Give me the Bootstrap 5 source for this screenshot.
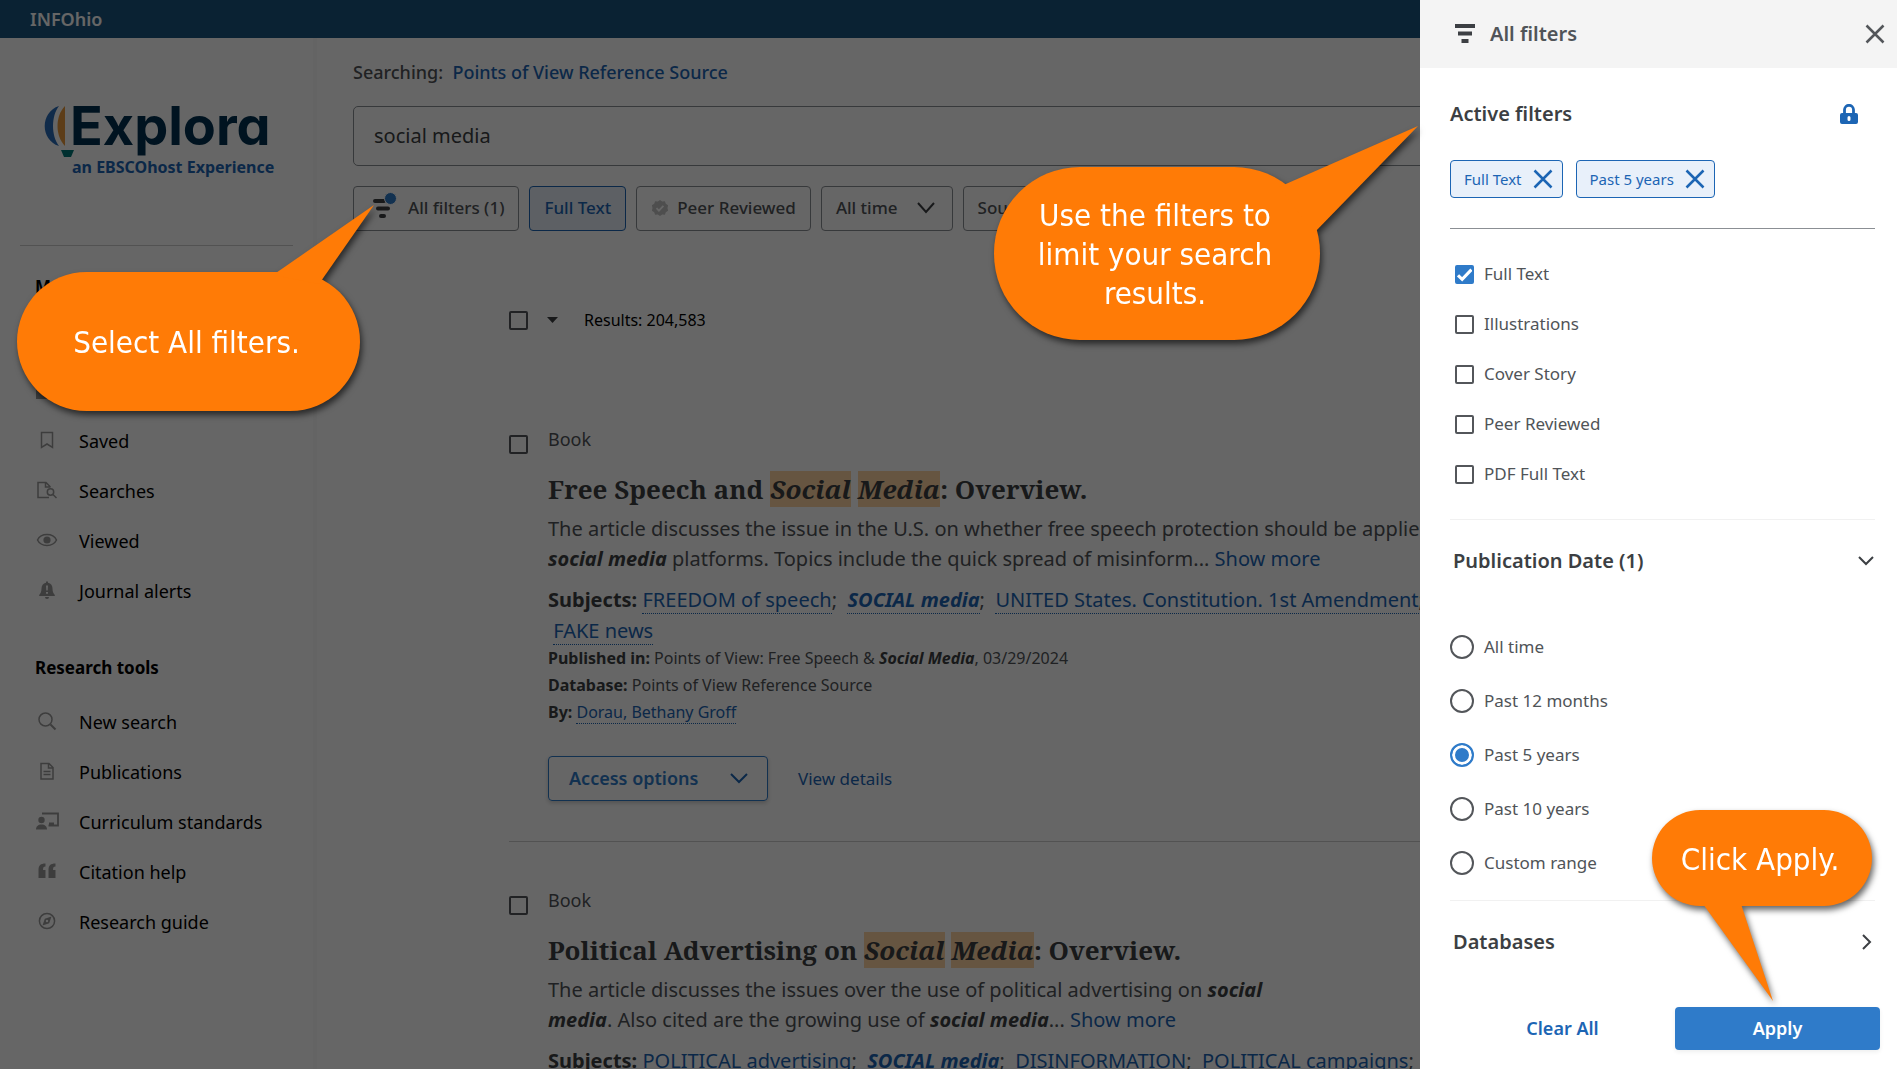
<!DOCTYPE html>
<html lang="en">
<head>
<meta charset="utf-8">
<meta name="viewport" content="width=device-width, initial-scale=1">
<title>Explora – social media</title>
<link href="https://cdn.jsdelivr.net/npm/bootstrap@5.3.0/dist/css/bootstrap.min.css" rel="stylesheet">
<style>
:root{--link:#1c65b4;--ink:#505458;--dark:#3c3f43;--blue:#2f7bc9;--orange:#ff7b06}
body{font-family:"Noto Sans",sans-serif;font-size:17px;line-height:24px;color:var(--ink);background:#fff}
a{color:var(--link);text-decoration:none}
svg{display:block;flex:none}
.topbar{background:#1a5580;height:38px;padding:0 30px;color:#fff;font-size:18px;font-weight:600}
/* sidebar */
.side{width:313px;flex:none;padding:0 20px;font-size:18px}
.edge{width:4px;flex:none;background:#f9f9f9}
.brand{height:207px;padding:58px 0 0 24px}
.brand-name{font-family:Inter,Lato,sans-serif;font-feature-settings:"cv11";font-weight:700;font-size:54px;line-height:60px;color:#003050}
.brand-sub{font-size:16px;line-height:22px;font-weight:700;color:var(--link);white-space:nowrap;padding-left:28px}
.side-rule{height:1px;background:#ccc}
.side h2{font-size:17px;line-height:24px;font-weight:700;color:#000;margin:29px 0 18px 15px}
.side ul+h2{margin-top:39px}
.side li{height:50px}
.side li a{color:#000;display:flex;align-items:center;height:50px;gap:20px;padding:0 0 2px 15px}
.side li svg{width:24px;height:24px;color:#999;margin:-2px 0 0}
/* search area */
.pane{padding:22px 36px 0}
.searching{font-size:18px;font-weight:500;margin-bottom:22px}
.search-box{height:60px;border:1px solid #8b8f94;border-radius:5px;padding:0 20px 2px;font-size:20px;color:var(--dark);width:100%;background:#fff}
.filters{margin-top:20px;gap:10px;white-space:nowrap}
.filters .btn{height:45px;border:1px solid #8b8f94;border-radius:4px;padding:0 14px 2px;font-size:17px;font-weight:500;color:var(--ink);display:flex;align-items:center}
.filters .btn.on{border-color:var(--link);background:#e8f0fa;color:var(--link)}
.filters .funnel{margin-right:12px;overflow:visible}
.results{padding-left:156px}
.bar{margin:77px 0 49px;font-size:16px;color:#000}
.tick{width:19px;height:19px;border:2px solid #53565a!important;border-radius:2px!important;margin:0!important;flex:none;float:none!important}
.tick:checked{background-color:var(--blue);border-color:var(--blue)!important}
.hit-item{padding-top:46px;gap:20px;font-size:16px}
.hit-item>.tick{margin-top:8px!important}
.kind{font-size:18px}
.hit-item h3{font-family:"Noto Serif","Liberation Serif",serif;font-weight:700;font-size:26px;line-height:36px;color:var(--dark);margin:20px 0 7px}
.hit-item h3 em{background:#ffd5a3;display:inline-block}
.abstract{font-size:20px;line-height:30px;margin:0 0 10px}
.subjects{font-size:20px;line-height:31px;margin-bottom:-1px}
.meta{line-height:27px}
.dot{border-bottom:1px dotted var(--link)}
b,strong{font-weight:700;color:var(--dark)}
a b{color:var(--link)}
.actions{margin:30px 0 40px;gap:30px;font-size:17px}
.actions .btn{width:220px;height:45px;border:1px solid var(--blue);border-radius:4px;color:var(--blue);font-size:18px;font-weight:600;padding:0 18px 0 20px;box-shadow:0 2px 4px #0003}
.item-rule{height:1px;background:#ccc}
/* filter panel */
.offcanvas-backdrop.dim{opacity:.6}
.offcanvas.panel{width:477px;border:0;background:#fff;color:var(--ink)}
.panel-head{height:68px;background:#f4f4f4;padding:0 12px 0 35px;font-size:20px;font-weight:600}
.panel-head .me-3{margin-right:15px!important}
.panel-body{padding:32px 22px 0 30px;flex:1 1 auto;overflow:hidden}
.panel h2{font-size:20px;line-height:28px;font-weight:600;color:var(--dark);margin:0}
.chips{margin:32px 0 30px;gap:13px}
.chips .btn{height:38px;border:1px solid var(--link);border-radius:4px;background:#e8f0fa;color:var(--link);font-size:15px;padding:0 9px 0 13px;display:flex;align-items:center;gap:11px}
.rule{height:1px;background:#8b8f94}
.rule.soft{background:#f1f1f1}
.checks{padding:20px 0 20px 5px}
.checks .form-check{height:50px;gap:10px;padding:0;margin:0}
.checks .tick:checked{background-image:url("data:image/svg+xml,%3csvg xmlns='http://www.w3.org/2000/svg' viewBox='0 0 16 16'%3e%3cpath fill='none' stroke='%23fff' stroke-width='3' d='M1.5 8.5l4 4 9-9.500'/%3e%3c/svg%3e");background-size:16px}
.fold{height:82px;padding:0 1px 0 3px;background:none;border:0;width:100%;text-align:left}
.radios{padding:18px 0 10px}
.radios .form-check{height:54px;gap:10px;padding:0;margin:0}
.dial{width:24px!important;height:24px!important;border:2px solid #53565a!important;margin:0!important;float:none!important;flex:none}
.dial:checked{border-color:var(--blue)!important;background:var(--blue)!important;box-shadow:inset 0 0 0 3px #fff!important}
.panel-foot{padding:0 17px 19px 40px;gap:10px}
.panel-foot .btn{flex:1 1 0;height:43px;border:0;border-radius:4px;font-size:18px;font-weight:600;padding:0}
.btn.clear{color:var(--link)}
.btn.apply{background:var(--blue)}
/* tutorial balloons, over everything else */
.tip{position:absolute;z-index:2000;color:#fff;font-family:"DejaVu Sans Condensed","DejaVu Sans",sans-serif;font-size:31px;line-height:39px;text-align:center;border-radius:86px;background:var(--orange);display:flex;align-items:center;justify-content:center;padding:2px 4px 0 0;filter:drop-shadow(2px 4px 3px #0009)}
.tip svg{position:absolute;fill:var(--orange);overflow:visible;left:0;top:0;width:1px;height:1px}
.tip span{position:relative}
.tip-a{left:17px;top:272px;width:343px;height:139px}
.tip-b{right:577px;top:167px;width:326px;height:173px}
.tip-c{right:25px;bottom:163px;width:220px;height:96px}
</style>
<script src="https://cdn.jsdelivr.net/npm/bootstrap@5.3.0/dist/js/bootstrap.bundle.min.js"></script>
</head>
<body>
<div class="vh-100 overflow-hidden d-flex flex-column">
  <header class="topbar d-flex align-items-center flex-shrink-0">INFOhio</header>
  <div class="d-flex flex-grow-1 overflow-hidden">
    <nav class="side" aria-label="Main">
      <div class="brand">
        <div class="d-flex">
          <svg width="26" height="60" viewBox="0 0 26 60" overflow="visible"><path d="M15 10C-4 16-4 44 15 50 7 40 7 20 15 10z" fill="#2a6cb8"/><path d="M21 10v40C11 40 11 20 21 10z" fill="#e99a3c"/><path d="M17 54h13l-3 7h-7z" fill="#007878"/></svg>
          <div class="brand-name">Explora</div>
        </div>
        <div class="brand-sub">an EBSCOhost Experience</div>
      </div>
      <div class="side-rule"></div>
      <h2>My dashboard</h2>
      <ul class="list-unstyled m-0">
        <li><a href="#"><svg viewBox="0 0 24 24" fill="currentColor"><path d="M4 4h7v7H4zM13 4h7v7h-7zM4 13h7v7H4zM13 13h7v7h-7z"/></svg>Overview</a></li>
        <li><a href="#"><svg viewBox="0 0 24 24" fill="currentColor"><path d="M1 5h8l2 3h12v13H1z"/></svg>Projects</a></li>
        <li><a href="#"><svg viewBox="0 0 24 24" fill="none" stroke="currentColor" stroke-width="1.500"><path d="M6.500 4.500h11v15L12 16l-5.500 3.500z"/></svg>Saved</a></li>
        <li><a href="#"><svg viewBox="0 0 24 24" fill="none" stroke="currentColor" stroke-width="1.500"><path d="M14 19.500H3v-15h8l4 4v1M10.500 4.500V9H15"/><circle cx="15.500" cy="14" r="3.200"/><path d="M18 16.500l3.500 3.500"/></svg>Searches</a></li>
        <li><a href="#"><svg viewBox="0 0 24 24" fill="none" stroke="currentColor" stroke-width="1.500"><path d="M2.500 12C6 4.800 18 4.800 21.500 12 18 19.200 6 19.200 2.500 12z"/><circle cx="12" cy="12" r="3.600" fill="currentColor" stroke="none"/></svg>Viewed</a></li>
        <li><a href="#"><svg viewBox="0 0 24 24" fill="currentColor"><path fill-rule="evenodd" d="M11 3.500h2v1.200c3 .5 4.500 2.800 4.500 5.800 0 3.500 1 5 2.300 6.500v1H4.200v-1c1.300-1.500 2.300-3 2.300-6.500 0-3 1.500-5.300 4.500-5.800zM11 7.500l.3 5h1.400l.3-5zM11 14v1.800h2V14z"/><path d="M10 19h4a2 2 0 0 1-4 0z"/></svg>Journal alerts</a></li>
      </ul>
      <h2>Research tools</h2>
      <ul class="list-unstyled m-0">
        <li><a href="#"><svg viewBox="0 0 24 24" fill="none" stroke="currentColor" stroke-width="1.500"><circle cx="10.500" cy="10.500" r="6.500"/><path d="M15.500 15.500l5 5" stroke-width="2"/></svg>New search</a></li>
        <li><a href="#"><svg viewBox="0 0 24 24" fill="none" stroke="currentColor" stroke-width="1.500"><path d="M6 4.500h8l4 4v11.500H6zM13.500 4.500V9H18M8.500 12.500h7M8.500 15.500h7"/></svg>Publications</a></li>
        <li><a href="#"><svg viewBox="0 0 24 24" fill="currentColor"><path d="M7 4.500h16v12H13.500" fill="none" stroke="currentColor" stroke-width="1.800"/><path d="M14 13.500h5v2.500h-5z"/><circle cx="6.500" cy="11" r="3.200"/><path d="M1 20.500c0-3 2-5 5.500-5s5.500 2 5.500 5z"/></svg>Curriculum standards</a></li>
        <li><a href="#"><svg viewBox="0 0 24 24" fill="currentColor"><path d="M10.500 4.500v3C8.500 7.500 8 8.500 8 11h2.500v8h-7v-8c0-4.500 2-6.500 7-6.500zM20.500 4.500v3C18.500 7.500 18 8.500 18 11h2.500v8h-7v-8c0-4.500 2-6.500 7-6.500z"/></svg>Citation help</a></li>
        <li><a href="#"><svg viewBox="0 0 24 24" fill="none" stroke="currentColor" stroke-width="1.500"><circle cx="12" cy="12" r="7.600"/><path fill="currentColor" fill-rule="evenodd" stroke="none" d="M16.500 7.500l-2.300 6.700-6.700 2.300 2.300-6.700zM12 10.800a1.200 1.200 0 1 0 0 2.400 1.200 1.200 0 0 0 0-2.400z"/></svg>Research guide</a></li>
      </ul>
    </nav>
    <div class="edge"></div>
    <main class="pane flex-grow-1">
      <div class="searching">Searching:&nbsp; <a href="#">Points of View Reference Source</a></div>
      <input class="search-box" type="text" value="social media" aria-label="Search">
      <div class="filters d-flex">
        <button class="btn" type="button"><svg class="funnel" width="28" height="28" viewBox="0 0 28 28"><path d="M7 7h9M10 14.500h10M13 22h3" stroke="#3c3f43" stroke-width="4" stroke-linecap="round" fill="none"/><circle cx="22.500" cy="4.500" r="6" fill="#2f7bc9" stroke="#fff" stroke-width="1"/></svg>All filters (1)</button>
        <button class="btn on" type="button">Full Text</button>
        <button class="btn" type="button"><svg class="me-2" width="18" height="18" viewBox="0 0 18 18"><path d="M9 1l2.200 1.500 2.700-.2.900 2.500 2.300 1.400L16.500 9l.6 2.800-2.300 1.400-.9 2.500-2.700-.2L9 17l-2.200-1.500-2.700.2-.9-2.500L.9 11.800 1.500 9 .9 6.200l2.300-1.400.9-2.500 2.700.2z" fill="#c4c4c4"/><path d="M5.500 9.200l2.400 2.400 4.500-4.700" stroke="#fff" stroke-width="1.800" fill="none"/></svg>Peer Reviewed</button>
        <button class="btn" type="button">All time<svg class="ms-3" width="24" height="14" viewBox="-2 0 24 14"><path d="M2 2l8 9 8-9" stroke="#3c3f43" stroke-width="2" fill="none"/></svg></button>
        <button class="btn" type="button">Source type<svg class="ms-3" width="24" height="14" viewBox="-2 0 24 14"><path d="M2 2l8 9 8-9" stroke="#3c3f43" stroke-width="2" fill="none"/></svg></button>
      </div>
      <div class="results">
        <div class="bar d-flex align-items-center">
          <input class="form-check-input tick" type="checkbox" aria-label="Select all">
          <svg class="ms-3" width="24" height="8" viewBox="0 0 24 8"><path d="M3 1h11L8.500 7z" fill="#3c3f43"/></svg>
          <span class="ms-3">Results: 204,583</span>
        </div>
        <article class="hit-item d-flex">
          <input class="form-check-input tick" type="checkbox" aria-label="Select result 1">
          <div>
            <div class="kind">Book</div>
            <h3>Free Speech and <em>Social</em> <em>Media</em>: Overview.</h3>
            <p class="abstract">The article discusses the issue in the U.S. on whether free speech protection should be applied to<br><b><i>social media</i></b> platforms. Topics include the quick spread of misinform... <a href="#">Show more</a></p>
            <div class="subjects"><b>Subjects:</b> <a class="dot" href="#">FREEDOM of speech</a>;&nbsp; <a class="dot" href="#"><b><i>SOCIAL media</i></b></a>;&nbsp; <a class="dot" href="#">UNITED States. Constitution. 1st Amendment</a>;<br>&nbsp;<a class="dot" href="#">FAKE news</a></div>
            <div class="meta"><b>Published in:</b> Points of View: Free Speech &amp; <b><i>Social Media</i></b>, 03/29/2024</div>
            <div class="meta"><b>Database:</b> Points of View Reference Source</div>
            <div class="meta"><b>By:</b> <a class="dot" href="#">Dorau, Bethany Groff</a></div>
            <div class="actions d-flex align-items-center">
              <button class="btn d-flex align-items-center justify-content-between" type="button">Access options<svg width="20" height="14" viewBox="0 0 20 14"><path d="M2 2l8 8 8-8" stroke="#1c65b4" stroke-width="2" fill="none"/></svg></button>
              <a href="#">View details</a>
            </div>
          </div>
        </article>
        <div class="item-rule"></div>
        <article class="hit-item d-flex">
          <input class="form-check-input tick" type="checkbox" aria-label="Select result 2">
          <div>
            <div class="kind">Book</div>
            <h3>Political Advertising on <em>Social</em> <em>Media</em>: Overview.</h3>
            <p class="abstract">The article discusses the issues over the use of political advertising on <b><i>social<br>media</i></b>. Also cited are the growing use of <b><i>social media</i></b>... <a href="#">Show more</a></p>
            <div class="subjects"><b>Subjects:</b> <a class="dot" href="#">POLITICAL advertising</a>;&nbsp; <a class="dot" href="#"><b><i>SOCIAL media</i></b></a>;&nbsp; <a class="dot" href="#">DISINFORMATION</a>;&nbsp; <a class="dot" href="#">POLITICAL campaigns</a>;</div>
          </div>
        </article>
      </div>
    </main>
  </div>
</div>

<div class="offcanvas-backdrop dim"></div>
<aside class="offcanvas offcanvas-end show panel" tabindex="-1" data-bs-backdrop="false" data-bs-scroll="true" aria-label="All filters">
  <div class="panel-head d-flex align-items-center flex-shrink-0">
    <svg class="me-3" width="20" height="20" viewBox="0 0 20 20"><path d="M0 2h20M3 9.500h14M6.500 17h7" stroke="#3c3f43" stroke-width="4" fill="none"/></svg>All filters
    <button class="btn p-0 border-0 ms-auto" type="button" aria-label="Close"><svg width="20" height="20" viewBox="0 0 20 20"><path d="M1.500 1.500l17 17M18.500 1.500l-17 17" stroke="#53565a" stroke-width="2.500" fill="none"/></svg></button>
  </div>
  <div class="panel-body">
    <div class="d-flex align-items-center justify-content-between">
      <h2>Active filters</h2>
      <svg class="me-3" width="20" height="20" viewBox="0 0 20 20"><path d="M5.500 10V5.800a4.500 4.500 0 0 1 9 0V10" stroke="#1c65b4" stroke-width="2.800" fill="none"/><path fill="#1c65b4" fill-rule="evenodd" d="M3 9h14a2 2 0 0 1 2 2v7a2 2 0 0 1-2 2H3a2 2 0 0 1-2-2v-7a2 2 0 0 1 2-2zM10 12a1.500 1.500 0 0 0-1.500 1.500v2a1.500 1.500 0 0 0 3 0v-2A1.500 1.500 0 0 0 10 12z"/></svg>
    </div>
    <div class="chips d-flex">
      <button class="btn" type="button">Full Text<svg width="20" height="20" viewBox="0 0 20 20"><path d="M1.500 1.500l17 17M18.500 1.500l-17 17" stroke="#1c65b4" stroke-width="2.500" fill="none"/></svg></button>
      <button class="btn" type="button">Past 5 years<svg width="20" height="20" viewBox="0 0 20 20"><path d="M1.500 1.500l17 17M18.500 1.500l-17 17" stroke="#1c65b4" stroke-width="2.500" fill="none"/></svg></button>
    </div>
    <div class="rule"></div>
    <div class="checks">
      <div class="form-check d-flex align-items-center"><input class="form-check-input tick" type="checkbox" id="c1" checked><label for="c1">Full Text</label></div>
      <div class="form-check d-flex align-items-center"><input class="form-check-input tick" type="checkbox" id="c2"><label for="c2">Illustrations</label></div>
      <div class="form-check d-flex align-items-center"><input class="form-check-input tick" type="checkbox" id="c3"><label for="c3">Cover Story</label></div>
      <div class="form-check d-flex align-items-center"><input class="form-check-input tick" type="checkbox" id="c4"><label for="c4">Peer Reviewed</label></div>
      <div class="form-check d-flex align-items-center"><input class="form-check-input tick" type="checkbox" id="c5"><label for="c5">PDF Full Text</label></div>
    </div>
    <div class="rule soft"></div>
    <button class="fold d-flex align-items-center justify-content-between" type="button"><h2>Publication Date (1)</h2><svg width="16" height="10" viewBox="0 0 16 10"><path d="M1 1l7 7 7-7" stroke="#3c3f43" stroke-width="2" fill="none"/></svg></button>
    <div class="radios">
      <div class="form-check d-flex align-items-center"><input class="form-check-input dial" type="radio" name="date" id="r1"><label for="r1">All time</label></div>
      <div class="form-check d-flex align-items-center"><input class="form-check-input dial" type="radio" name="date" id="r2"><label for="r2">Past 12 months</label></div>
      <div class="form-check d-flex align-items-center"><input class="form-check-input dial" type="radio" name="date" id="r3" checked><label for="r3">Past 5 years</label></div>
      <div class="form-check d-flex align-items-center"><input class="form-check-input dial" type="radio" name="date" id="r4"><label for="r4">Past 10 years</label></div>
      <div class="form-check d-flex align-items-center"><input class="form-check-input dial" type="radio" name="date" id="r5"><label for="r5">Custom range</label></div>
    </div>
    <div class="rule soft"></div>
    <button class="fold d-flex align-items-center justify-content-between" type="button"><h2>Databases</h2><svg width="14" height="16" viewBox="0 0 14 16"><path d="M3 1l7 7-7 7" stroke="#3c3f43" stroke-width="2" fill="none"/></svg></button>
  </div>
  <div class="panel-foot d-flex flex-shrink-0">
    <button class="btn clear" type="button">Clear All</button>
    <button class="btn apply text-white shadow-sm" type="button">Apply</button>
  </div>
</aside>

<div class="tip tip-a"><svg><path d="M256 3L357-67 302 12z"/></svg><span>Select All filters.</span></div>
<div class="tip tip-b"><svg><path d="M285 20L424-41 320 66z"/></svg><span>Use the filters to<br>limit your search<br>results.</span></div>
<div class="tip tip-c"><svg><path d="M51 94L121 191 89 94z"/></svg><span>Click Apply.</span></div>
</body>
</html>
